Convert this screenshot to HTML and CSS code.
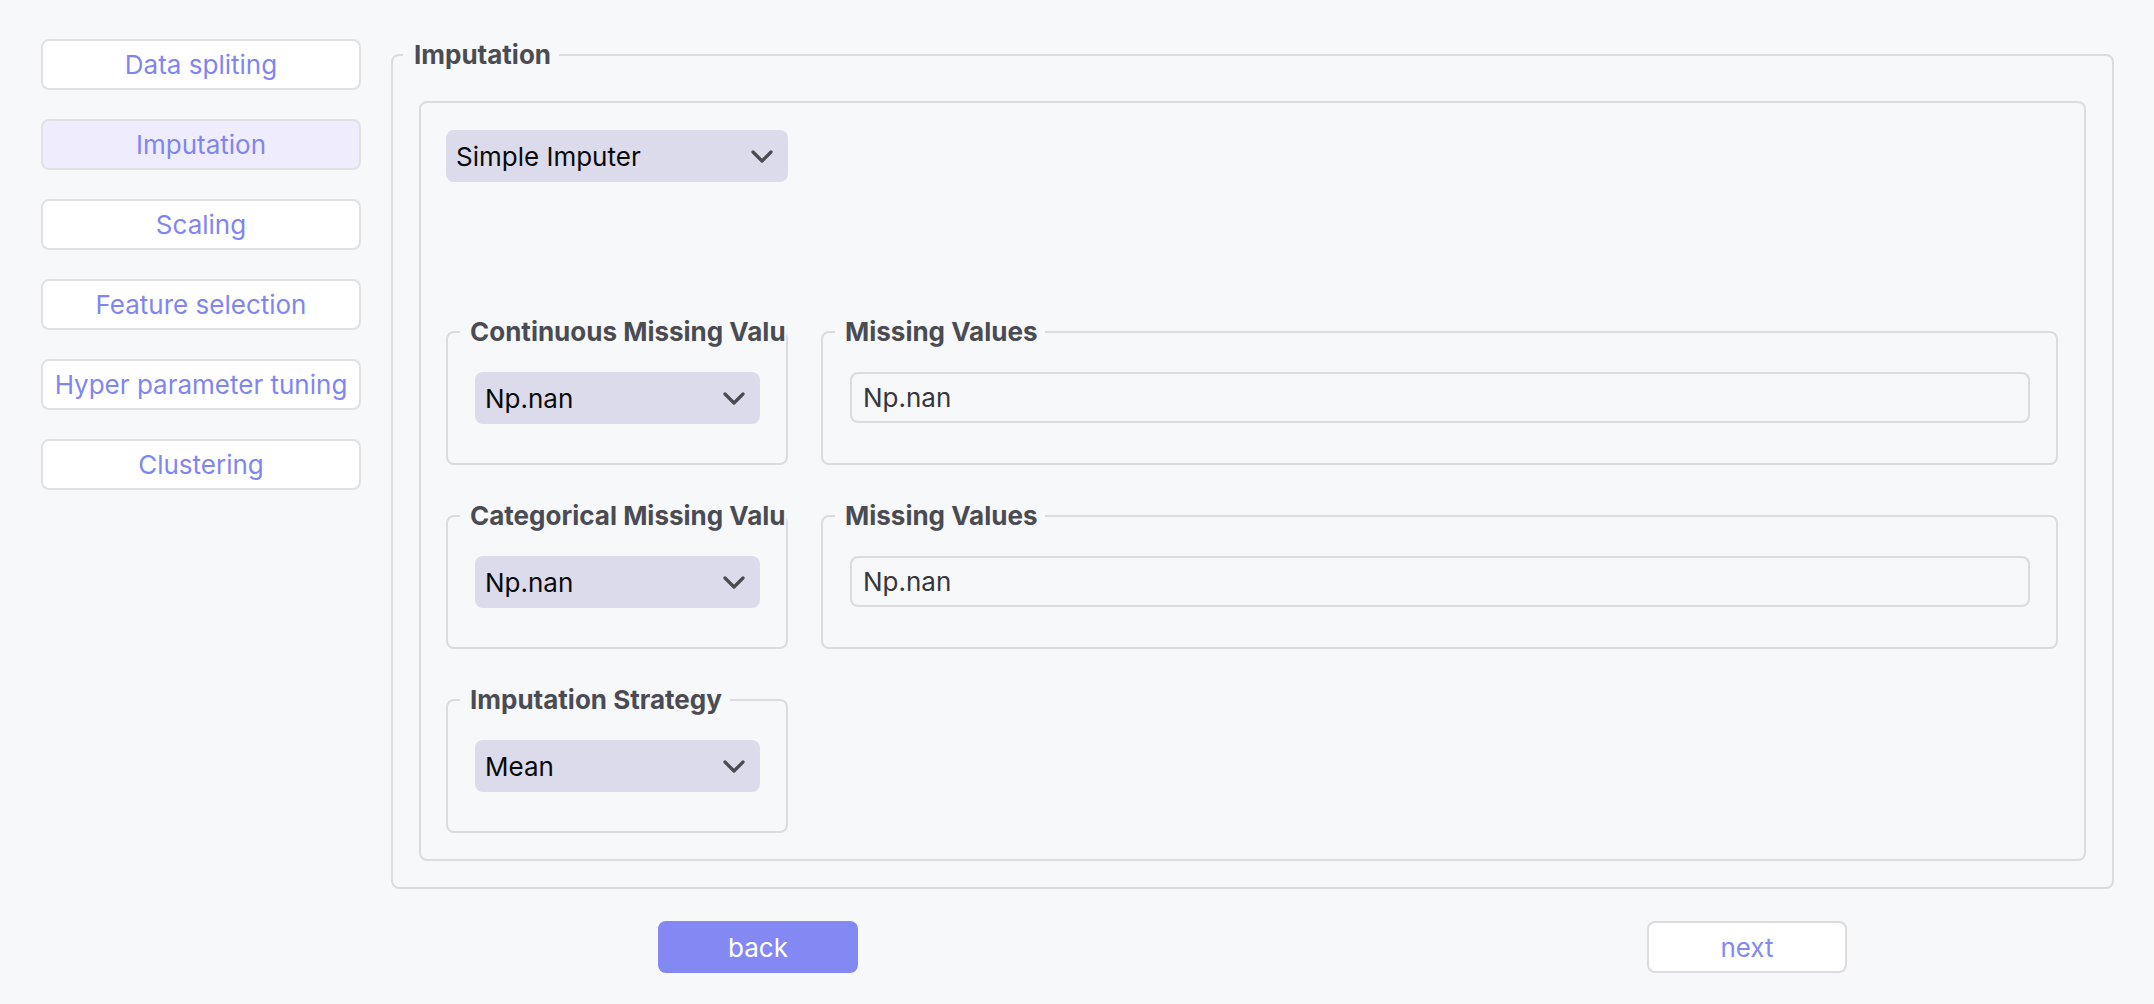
FILE: index.html
```html
<!DOCTYPE html>
<html lang="en">
<head>
<meta charset="utf-8">
<title>Imputation</title>
<link rel="stylesheet" href="styles.css">
</head>
<body>
<div class="app">
  <nav class="sidebar">
    <button class="nav-btn">Data spliting</button>
    <button class="nav-btn active">Imputation</button>
    <button class="nav-btn">Scaling</button>
    <button class="nav-btn">Feature selection</button>
    <button class="nav-btn">Hyper parameter tuning</button>
    <button class="nav-btn">Clustering</button>
  </nav>
  <main class="main">
    <fieldset class="outer">
      <legend class="outer-legend">Imputation</legend>
      <div class="inner">
        <div class="select wide">
          <span>Simple Imputer</span>
          <svg class="chev" viewBox="0 0 22 13" width="22" height="13"><path d="M2 2 L11 11 L20 2" fill="none" stroke="#4a4a52" stroke-width="3.2" stroke-linecap="round" stroke-linejoin="round"/></svg>
        </div>
        <div class="rows">
          <div class="row">
            <fieldset class="group narrow">
              <legend class="glegend">Continuous Missing Values</legend>
              <div class="gbody">
                <div class="select">
                  <span>Np.nan</span>
                  <svg class="chev" viewBox="0 0 22 13" width="22" height="13"><path d="M2 2 L11 11 L20 2" fill="none" stroke="#4a4a52" stroke-width="3.2" stroke-linecap="round" stroke-linejoin="round"/></svg>
                </div>
              </div>
            </fieldset>
            <fieldset class="group grow">
              <legend class="glegend">Missing Values</legend>
              <div class="gbody">
                <input class="text-input" type="text" value="Np.nan">
              </div>
            </fieldset>
          </div>
          <div class="row">
            <fieldset class="group narrow">
              <legend class="glegend">Categorical Missing Values</legend>
              <div class="gbody">
                <div class="select">
                  <span>Np.nan</span>
                  <svg class="chev" viewBox="0 0 22 13" width="22" height="13"><path d="M2 2 L11 11 L20 2" fill="none" stroke="#4a4a52" stroke-width="3.2" stroke-linecap="round" stroke-linejoin="round"/></svg>
                </div>
              </div>
            </fieldset>
            <fieldset class="group grow">
              <legend class="glegend">Missing Values</legend>
              <div class="gbody">
                <input class="text-input" type="text" value="Np.nan">
              </div>
            </fieldset>
          </div>
          <div class="row">
            <fieldset class="group narrow">
              <legend class="glegend">Imputation Strategy</legend>
              <div class="gbody">
                <div class="select">
                  <span>Mean</span>
                  <svg class="chev" viewBox="0 0 22 13" width="22" height="13"><path d="M2 2 L11 11 L20 2" fill="none" stroke="#4a4a52" stroke-width="3.2" stroke-linecap="round" stroke-linejoin="round"/></svg>
                </div>
              </div>
            </fieldset>
          </div>
        </div>
      </div>
    </fieldset>
    <div class="footer">
      <button class="act primary">back</button>
      <button class="act secondary">next</button>
    </div>
  </main>
</div>
</body>
</html>
```
FILE: styles.css
```css
* { box-sizing: border-box; }
html, body { margin: 0; padding: 0; }
body {
  background: #f7f8fa;
  font-family: Inter, "Noto Sans", sans-serif;
  font-size: 26px;
  color: #222;
}
.app {
  display: flex;
  gap: 30px;
  padding: 39px 40px 0 41px;
}
.sidebar {
  width: 320px;
  flex: none;
  display: flex;
  flex-direction: column;
  gap: 29px;
}
.nav-btn {
  height: 51px;
  background: #ffffff;
  border: 2px solid #e0e0e5;
  border-radius: 8px;
  font-family: inherit;
  font-size: 26px;
  color: #8086f1;
  padding: 0;
  cursor: pointer;
}
.nav-btn.active { background: #efedfd; }
.main { flex: 1; min-width: 0; }
.outer {
  margin: 0;
  min-width: 0;
  border: 2px solid #dcdce0;
  border-radius: 8px;
  padding: 0 26px 26px 10px;
}
.outer-legend {
  font-weight: 700;
  font-size: 26px;
  line-height: 32px;
  color: #4a4b53;
  padding: 0 8px 0 11px;
}
.inner {
  margin-top: 30px;
  margin-left: 16px;
  border: 2px solid #dcdce0;
  border-radius: 8px;
  padding: 27px 26px 26px 25px;
}
.select {
  display: flex;
  align-items: center;
  justify-content: space-between;
  height: 52px;
  background: #dcdbeb;
  border-radius: 8px;
  padding: 0 15px 0 10px;
  color: #0a0a0a;
  font-size: 26px;
}
.select.wide { width: 342px; }
.chev { display: block; flex: none; }
.rows {
  margin-top: 134px;
  display: flex;
  flex-direction: column;
  gap: 35px;
}
.row {
  display: flex;
  gap: 33px;
}
.group {
  margin: 0;
  min-width: 0;
  border: 2px solid #dcdce0;
  border-radius: 8px;
  padding: 0 12px 39px 12px;
  height: 149px;
}
.group.narrow { width: 342px; flex: none; }
.group.grow { flex: 1; }
.glegend {
  font-weight: 700;
  font-size: 26px;
  line-height: 32px;
  color: #4a4b53;
  padding: 0 8px 0 10px;
  white-space: nowrap;
  overflow: hidden;
  max-width: 326px;
}
.gbody {
  padding: 24px 14px 0 15px;
}
.text-input {
  display: block;
  width: 100%;
  height: 51px;
  border: 2px solid #dcdce0;
  border-radius: 8px;
  background: #f7f8fa;
  font-family: inherit;
  font-size: 26px;
  color: #36363c;
  padding: 0 11px;
  outline: none;
}
.footer {
  display: flex;
  gap: 789px;
  padding: 32px 0 0 267px;
}
.act {
  width: 200px;
  height: 52px;
  border-radius: 8px;
  font-family: inherit;
  font-size: 26px;
  padding: 0;
  cursor: pointer;
}
.act.primary {
  background: #8388f2;
  border: none;
  color: #ffffff;
}
.act.secondary {
  background: #ffffff;
  border: 2px solid #dcdce0;
  color: #8388f2;
}
```
